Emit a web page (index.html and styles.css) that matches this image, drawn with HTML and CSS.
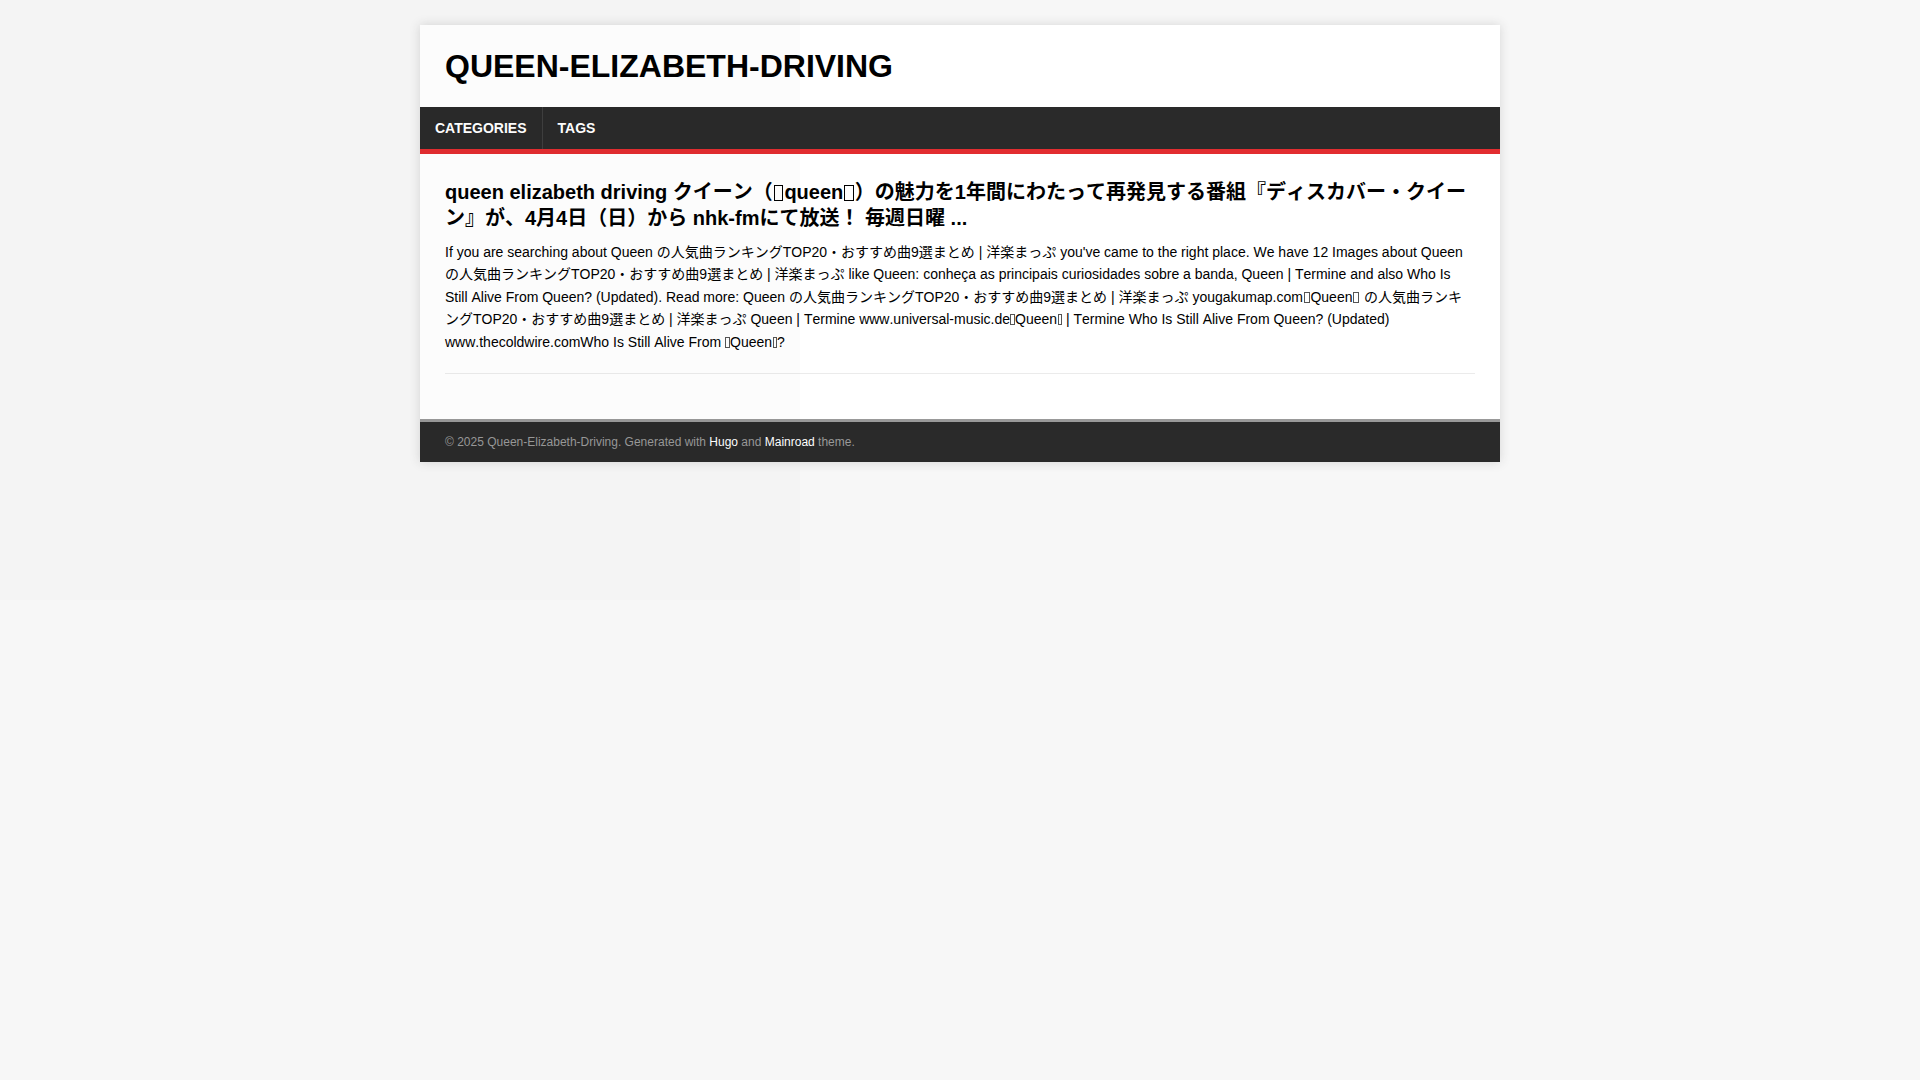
FILE: index.html
```html
<!DOCTYPE html>
<html lang="en">
<head>
<meta charset="utf-8">
<title>Queen-Elizabeth-Driving</title>
<link rel="stylesheet" href="styles.css">
</head>
<body>
<div class="container">
  <header class="header">
    <a class="logo" href="#">QUEEN-ELIZABETH-DRIVING</a>
  </header>
  <nav class="menu">
    <ul class="menu-list">
      <li class="menu-item"><a class="menu-link" href="#">Categories</a></li>
      <li class="menu-item"><a class="menu-link" href="#">Tags</a></li>
    </ul>
  </nav>
  <main class="main">
    <article class="post">
      <h1 class="post-title"><a href="#">queen elizabeth driving クイーン（<span class="tofu"></span>queen<span class="tofu"></span>）の魅力を1年間にわたって再発見する番組『ディスカバー・クイーン』が、4月4日（日）から nhk-fmにて放送！ 毎週日曜 ...</a></h1>
      <p class="post-text">If you are searching about Queen の人気曲ランキングTOP20・おすすめ曲9選まとめ | 洋楽まっぷ you've came to the right place. We have 12 Images about Queen の人気曲ランキングTOP20・おすすめ曲9選まとめ | 洋楽まっぷ like Queen: conheça as principais curiosidades sobre a banda, Queen | Termine and also Who Is Still Alive From Queen? (Updated). Read more: Queen の人気曲ランキングTOP20・おすすめ曲9選まとめ | 洋楽まっぷ yougakumap.com<span class="tofu thin"></span>Queen<span class="tofu thin"></span> の人気曲ランキングTOP20・おすすめ曲9選まとめ | 洋楽まっぷ Queen | Termine www.universal-music.de<span class="tofu thin narrow"></span>Queen<span class="tofu thin narrow"></span> | Termine Who Is Still Alive From Queen? (Updated) www.thecoldwire.comWho Is Still Alive From <span class="tofu thin narrow"></span>Queen<span class="tofu thin narrow"></span>?</p>
    </article>
  </main>
  <footer class="footer">
    <p class="copyright">© 2025 Queen-Elizabeth-Driving. Generated with <a href="#">Hugo</a> and <a href="#">Mainroad</a> theme.</p>
  </footer>
</div>
<div class="overlay"></div>
</body>
</html>
```

FILE: styles.css
```css
html, body {
  margin: 0;
  padding: 0;
}
body {
  background: #f7f7f7;
  color: #000;
  font-family: "Liberation Sans", Arial, "Noto Sans CJK JP", sans-serif;
  font-size: 14px;
  line-height: 1.6;
  padding: 25px 0;
}
a {
  color: inherit;
  text-decoration: none;
}
.container {
  max-width: 1080px;
  margin: 0 auto;
  background: #fff;
  box-shadow: 0 0 10px rgba(50, 50, 50, 0.17);
}
.header {
  padding: 25px;
}
.logo {
  display: block;
  font-size: 32px;
  font-weight: 700;
  line-height: 1;
  color: #000;
}
.menu {
  background: #2a2a2a;
  border-bottom: 5px solid #e22d30;
}
.menu-list {
  display: flex;
  margin: 0;
  padding: 0;
  list-style: none;
}
.menu-item + .menu-item {
  border-left: 1px solid rgba(255, 255, 255, 0.1);
}
.menu-link {
  display: block;
  padding: 14px 15px;
  font-size: 14px;
  font-weight: 700;
  line-height: 14px;
  color: #fff;
  text-transform: uppercase;
}
.main {
  padding: 25px;
}
.post {
  padding-bottom: 20px;
  margin-bottom: 20px;
  border-bottom: 1px solid #ebebeb;
}
.post-title {
  margin: 0 0 10px;
  font-size: 20px;
  font-weight: 700;
  line-height: 26px;
  font-kerning: none;
}
.post-text {
  margin: 0;
  line-height: 22.4px;
  font-kerning: none;
}
.tofu {
  display: inline-block;
  width: 0.46em;
  height: 0.78em;
  border: 1px solid currentColor;
  box-sizing: border-box;
  margin: 0 0.06em;
  vertical-align: -0.08em;
}
.tofu.thin {
  width: 0.42em;
  margin: 0 0.06em;
  border-color: #555;
}
.tofu.thin.narrow {
  width: 0.3em;
  margin: 0 0.03em;
}
.footer {
  padding: 10px 25px;
  background: #2a2a2a;
  border-top: 3px solid #999;
  color: #999;
  font-size: 12px;
  line-height: 20px;
}
.copyright {
  margin: 0;
}
.copyright a {
  color: #fff;
}
.overlay {
  position: fixed;
  top: 0;
  left: 0;
  width: 800px;
  height: 600px;
  background: rgba(0, 0, 0, 0.012);
  pointer-events: none;
}
```
